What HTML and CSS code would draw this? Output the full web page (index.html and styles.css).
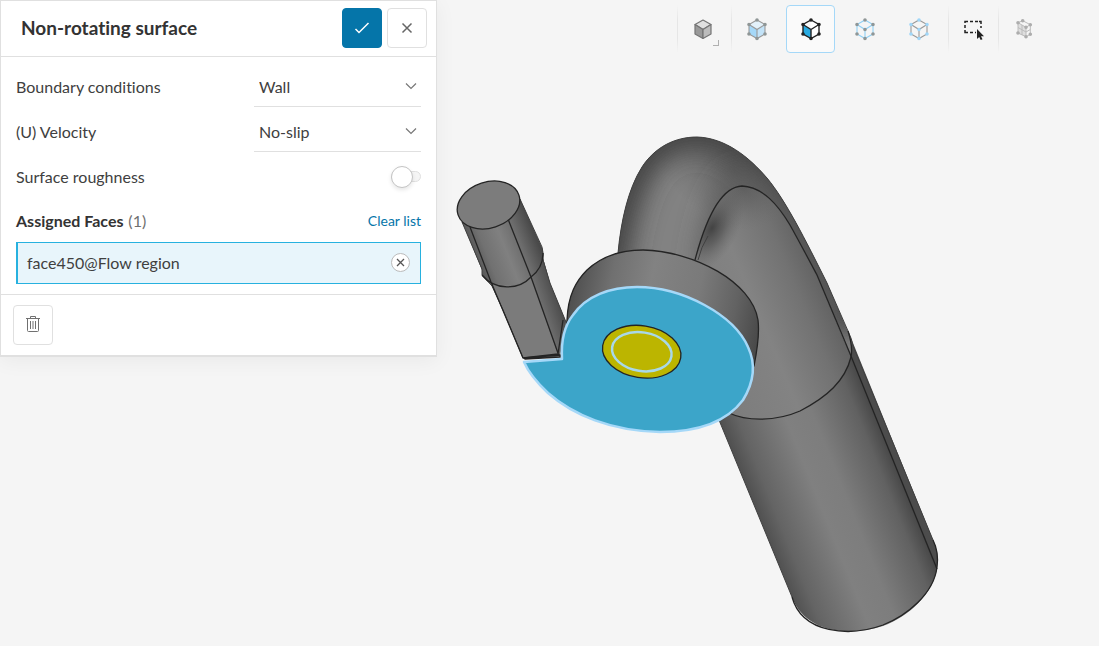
FILE: index.html
```html
<!DOCTYPE html>
<html lang="en">
<head>
<meta charset="utf-8">
<title>Non-rotating surface</title>
<link rel="stylesheet" href="styles.css">
</head>
<body>
<main class="workspace">
  <svg class="scene" viewBox="0 0 1099 646" role="img" aria-label="Pump flow region model">
    <defs>
      <linearGradient id="pipe" gradientUnits="userSpaceOnUse" x1="755" y1="508" x2="892" y2="453">
        <stop offset="0" stop-color="#505050"/><stop offset=".12" stop-color="#646464"/><stop offset=".42" stop-color="#808080"/><stop offset=".6" stop-color="#7d7d7d"/><stop offset=".88" stop-color="#616161"/><stop offset="1" stop-color="#464646"/>
      </linearGradient>
      <linearGradient id="elbow" gradientUnits="userSpaceOnUse" x1="700" y1="345" x2="836" y2="288">
        <stop offset="0" stop-color="#7c7c7c"/><stop offset=".45" stop-color="#838383"/><stop offset=".75" stop-color="#727272"/><stop offset="1" stop-color="#5c5c5c"/>
      </linearGradient>
      <linearGradient id="rim" gradientUnits="userSpaceOnUse" x1="567" y1="300" x2="759" y2="340">
        <stop offset="0" stop-color="#4d4d4d"/><stop offset=".2" stop-color="#707070"/><stop offset=".4" stop-color="#828282"/><stop offset=".65" stop-color="#7a7a7a"/><stop offset=".85" stop-color="#626262"/><stop offset="1" stop-color="#484848"/>
      </linearGradient>
      <linearGradient id="outlet" gradientUnits="userSpaceOnUse" x1="472" y1="252" x2="532" y2="228">
        <stop offset="0" stop-color="#555"/><stop offset=".2" stop-color="#717171"/><stop offset=".5" stop-color="#808080"/><stop offset=".75" stop-color="#6c6c6c"/><stop offset="1" stop-color="#494949"/>
      </linearGradient>
      <linearGradient id="outlet-side" gradientUnits="userSpaceOnUse" x1="540" y1="312" x2="561" y2="305">
        <stop offset="0" stop-color="#747474"/><stop offset="1" stop-color="#4a4a4a"/>
      </linearGradient>
      <radialGradient id="crease"><stop offset="0" stop-color="#434343"/><stop offset=".4" stop-color="#555" stop-opacity=".75"/><stop offset="1" stop-color="#6c6c6c" stop-opacity="0"/></radialGradient>
      <radialGradient id="crown"><stop offset="0" stop-color="#555" stop-opacity=".75"/><stop offset="1" stop-color="#666" stop-opacity="0"/></radialGradient>
      <clipPath id="bend-clip"><path d="M618 253C621 221 628 189 642 167C655 147 675 137 697 137C725 138 748 156 767 178C786 201 805 239 827 283L852 341L851 357L817 275C809 260 800 243 790 225C778 205 763 187 742 186C721 187 706 218 695 260L690 280H615Z"/></clipPath>
      <clipPath id="elbow-clip"><path d="M695 260C706 218 721 187 742 186C763 187 778 205 790 225C800 243 809 260 817 275L851 357C845 381 827 397 800 411C775 422 746 421 729 413L690 330Z"/></clipPath>
      <filter id="soft" x="-30%" y="-30%" width="160%" height="160%"><feGaussianBlur stdDeviation="12"/></filter>
    </defs>
    <path fill="url(#pipe)" d="M719 420L729 410L851 341L933 540Q939 552 937 567C934 594 908 617 883 626C850 637 805 633 792 597Z"/>
    <path fill="#4c4c4c" d="M851 338L933 540Q939 552 937 567L851 357Z"/>
    <g clip-path="url(#bend-clip)">
      <path fill="#828282" d="M600 120H870V400H600Z"/>
      <ellipse fill="url(#crown)" cx="735" cy="172" rx="80" ry="52" transform="rotate(25 735 172)"/>
      <path class="shade" filter="url(#soft)" d="M607 275C614 215 626 180 640 160C655 140 675 130 697 130C727 131 754 151 773 175C792 200 810 236 855 330"/>
      <path class="shade shade-inner" filter="url(#soft)" d="M708 270C714 218 727 184 742 182C768 185 790 218 837 315"/>
    </g>
    <g clip-path="url(#elbow-clip)">
      <path fill="url(#elbow)" d="M680 180H860V430H680Z"/>
      <ellipse fill="url(#crease)" cx="712" cy="228" rx="26" ry="48" transform="rotate(28 712 228)"/>
      <ellipse fill="url(#crease)" cx="743" cy="188" rx="50" ry="42" opacity=".45"/>
    </g>
    <path class="edge edge-faint" d="M618 253C621 221 628 189 642 167C655 147 675 137 697 137C725 138 748 156 767 178C786 201 805 239 827 283L848 331Q852 339 853 346L933 540M792 597L719 420"/>
    <path class="edge" d="M933 540Q939 552 937 567C934 594 906 616 883 625C850 637 802 634 792 597"/>
    <path class="edge" d="M695 260C706 218 721 187 742 186C763 187 778 205 790 225C800 243 809 260 817 275L851 356L937 569"/>
    <path class="edge" d="M848 331Q853 346 851 357C845 381 827 397 800 411C775 422 746 421 729 413"/>
    <path class="edge edge-faint" d="M698 260Q701 247 708 236"/>
    <path class="edge" fill="url(#rim)" d="M561 360L567 320C568 295 576 281 587 270C601 257 621 250 643 250C694 251 752 282 758 320Q760 336 754 366L720 400Z"/>

    <path fill="#606060" d="M463 223L482 270L482 276L492 286L503 310L523 358L560 357L566 322L550 283L543 258L543 250L520 199Z"/>
    <path fill="url(#outlet)" d="M462 222L482 270L482 275C495 291 519 290 531 277Q543 268 543 250L520 199Z"/>
    <path fill="#7b7b7b" d="M491 283Q516 289 531 277L558 354L523 358Z"/>
    <path fill="url(#outlet-side)" d="M531 277Q540 269 543 258L550 283L566 322L558 354Z"/>
    <path class="edge edge-faint" d="M462 222L482 269L482 275L492 286L503 310L523 358M520 199L542 247Q544 255 543 260L550 283L566 322"/>
    <path class="edge" d="M482 275C495 291 519 290 531 277Q543 268 543 253M470 227L491 282L523 358L558 354M508 219L531 277L559 356M558 354L563 320"/>
    <ellipse class="edge" fill="#7c7c7c" cx="488.500" cy="205" rx="32" ry="23" transform="rotate(-18 488.500 205)"/>

    <path class="face" d="M524 362L562 359C561 341 565 325 573 315C586 296 610 287 637 287C683 287 734 315 748 347C756 364 754 382 743 400C725 424 693 432 660 432C611 431 573 415 548 393Q530 376 524 362Z"/>
    <path class="edge" fill="#777" d="M524 358L560 355L560 357L525 359Z"/>
    <ellipse class="edge" fill="#bcb500" cx="641.700" cy="351.700" rx="39.500" ry="26" transform="rotate(9 641.700 351.700)"/>
    <ellipse class="ring" cx="641.800" cy="351.700" rx="30" ry="19.300" transform="rotate(9 641.800 351.700)"/>
  </svg>

  <form class="panel">
    <header class="panel-header">
      <h1 class="panel-title">Non-rotating surface</h1>
      <button class="button button-primary" type="button" aria-label="Apply">
        <svg width="18" height="18" viewBox="0 0 18 18"><path class="stroke-icon" d="M2.500 10L6 13.500L15.500 4"/></svg>
      </button>
      <button class="button" type="button" aria-label="Close">
        <svg width="18" height="18" viewBox="0 0 18 18"><path class="stroke-icon" d="M4.500 4.500L13.500 13.500M13.500 4.500L4.500 13.500"/></svg>
      </button>
    </header>
    <div class="panel-body">
      <div class="row">
        <label for="condition">Boundary conditions</label>
        <span class="select-wrap">
          <select class="select" id="condition"><option>Wall</option></select>
          <svg class="chevron" width="12" height="8" viewBox="0 0 12 8"><path class="stroke-icon" d="M1 1.500L6 6.500L11 1.500"/></svg>
        </span>
      </div>
      <div class="row">
        <label for="velocity">(U) Velocity</label>
        <span class="select-wrap">
          <select class="select" id="velocity"><option>No-slip</option></select>
          <svg class="chevron" width="12" height="8" viewBox="0 0 12 8"><path class="stroke-icon" d="M1 1.500L6 6.500L11 1.500"/></svg>
        </span>
      </div>
      <div class="row">
        <label for="roughness">Surface roughness</label>
        <input class="toggle" id="roughness" type="checkbox">
      </div>
      <div class="row row-list">
        <h2 class="list-title">Assigned Faces <span class="count">(1)</span></h2>
        <a class="clear" href="#">Clear list</a>
      </div>
      <div class="face-item">
        <span>face450@Flow region</span>
        <button class="remove" type="button" aria-label="Remove face">
          <svg width="9" height="9" viewBox="0 0 9 9"><path class="stroke-icon" d="M1 1L8 8M8 1L1 8"/></svg>
        </button>
      </div>
    </div>
    <footer class="panel-footer">
      <button class="button" type="button" aria-label="Delete">
        <svg width="16" height="18" viewBox="0 0 16 18"><path class="trash" d="M1 2.500H15M5.500 2V.5H10.500V2M2.500 3V14.500Q2.500 15.500 3.500 15.500H12.500Q13.500 15.500 13.500 14.500V3M5.500 5V13M8 5V13M10.500 5V13"/></svg>
      </button>
    </footer>
  </form>

  <nav class="toolbar" aria-label="View and selection">
    <div class="tool-group tool-group-first">
      <button class="tool tool-menu" type="button" aria-label="Render mode">
        <svg width="24" height="24" viewBox="0 0 24 24"><g stroke="#757575" stroke-width="1.200" stroke-linejoin="round"><path fill="#e0e0e0" d="M12 3L20 7.500L12 12.500L4 7.500Z"/><path fill="#999" d="M4 7.500L12 12.500V21.500L4 17Z"/><path fill="#bcbcbc" d="M20 7.500L12 12.500V21.500L20 17Z"/></g></svg>
      </button>
    </div>
    <div class="tool-group">
      <button class="tool" type="button" aria-label="Select volumes">
        <svg width="24" height="24" viewBox="0 0 24 24"><path fill="#e3f1fa" d="M12 3L20 7.500L12 12.500L4 7.500Z"/><path fill="#a5d8f8" d="M4 7.500L12 12.500V21.500L4 17Z"/><path fill="#c3e3f8" d="M20 7.500L12 12.500V21.500L20 17Z"/><path class="cube cube-gray" d="M12 3L20 7.500V17L12 21.500L4 17V7.500ZM4 7.500L12 12.500L20 7.500M12 12.500V21.500"/><path class="dots dots-gray" d="M12 3h0M20 7.500h0M20 17h0M12 21.500h0M4 17h0M4 7.500h0"/></svg>
      </button>
      <button class="tool tool-active" type="button" aria-label="Select faces" aria-pressed="true">
        <svg width="24" height="24" viewBox="0 0 24 24"><path fill="#fff" d="M12 3L20 7.500V17L12 21.500Z"/><path fill="#29abe2" d="M4 7.500L12 12.500V21.500L4 17Z"/><path class="cube cube-black" d="M12 3L20 7.500V17L12 21.500L4 17V7.500ZM4 7.500L12 12.500L20 7.500M12 12.500V21.500"/><path class="dots dots-black" d="M12 3h0M20 7.500h0M20 17h0M12 21.500h0M4 17h0M4 7.500h0"/></svg>
      </button>
      <button class="tool" type="button" aria-label="Select edges">
        <svg width="24" height="24" viewBox="0 0 24 24"><path class="cube cube-blue" d="M12 3L20 7.500V17L12 21.500L4 17V7.500ZM4 7.500L12 12.500L20 7.500M12 12.500V21.500"/><path class="dots dots-gray" d="M12 3h0M20 7.500h0M20 17h0M12 21.500h0M4 17h0M4 7.500h0M12 12.500h0"/></svg>
      </button>
      <button class="tool" type="button" aria-label="Select vertices">
        <svg width="24" height="24" viewBox="0 0 24 24"><path class="cube cube-gray" d="M12 3L20 7.500V17L12 21.500L4 17V7.500ZM4 7.500L12 12.500L20 7.500M12 12.500V21.500"/><path class="dots dots-blue" d="M12 3h0M20 7.500h0M20 17h0M12 21.500h0M4 17h0M4 7.500h0M12 12.500h0"/></svg>
      </button>
    </div>
    <div class="tool-group tool-group-tight">
      <button class="tool" type="button" aria-label="Box select">
        <svg width="24" height="24" viewBox="0 0 24 24"><path fill="none" stroke="#222" stroke-width="1.500" d="M3 6V4.500H6M8 4.500H11M13 4.500H16M17 4.500H19V7M19 9V11M3 8V11M3 13V15.500H6M8 15.500H11M13 15.500H14"/><path fill="#222" d="M15 12V22L17.200 20L18.700 23L20.500 22.200L19 19.200H22Z"/></svg>
      </button>
    </div>
    <div class="tool-group tool-group-tight">
      <button class="tool" type="button" aria-label="Select mesh">
        <svg width="24" height="24" viewBox="0 0 24 24"><path fill="#dedede" d="M6 5.700L14 10.300V19.700L6 16Z"/><path class="cube cube-pale" d="M10.700 3.700L18.300 7.700V17.300L14 19.700L6 16V5.700ZM6 5.700L14 10.300L18.300 7.700M14 10.300V19.700M6 10.500L14 15L18.300 12.500M10 8V18"/><path class="dots dots-pale" d="M10.700 3.700h0M18.300 7.700h0M18.300 17.300h0M14 19.700h0M6 16h0M6 5.700h0M14 10.300h0"/></svg>
      </button>
    </div>
  </nav>
</main>
</body>
</html>
```

FILE: styles.css
```css
* { box-sizing: border-box; }

body {
  margin: 0;
  background: #f5f5f5;
  color: #404040;
  font: 16px/21px Lato, "Open Sans", sans-serif;
  font-variant-ligatures: none;
}

button, select { font: inherit; color: inherit; }

.workspace {
  position: relative;
  display: flex;
  align-items: flex-start;
  justify-content: space-between;
  min-height: 100vh;
  overflow: hidden;
}

/* 3D model drawn behind the panel and the toolbar */
.scene {
  position: absolute;
  inset: 0;
  width: 100%;
  height: 100%;
}

.edge { stroke: #242424; stroke-width: 1.3; stroke-linejoin: round; }
.edge:not([fill]) { fill: none; }
.edge-faint { stroke: #404040; stroke-width: 1; }
.shade { fill: none; stroke: #444; stroke-width: 40; }
.shade-inner { stroke: #5c5c5c; stroke-width: 22; }
.face { fill: #3ca5c9; stroke: #a5d8f8; stroke-width: 2.5; stroke-linejoin: round; }
.ring { fill: none; stroke: #a9d8e8; stroke-width: 2.5; }

.panel {
  position: relative;
  flex: 0 1 437px;
  border: 1px solid #e0e0e0;
  border-bottom-width: 2px;
  background: #fff;
  box-shadow: 0 4px 20px rgba(0, 0, 0, .05);
}

.panel-header {
  display: flex;
  align-items: center;
  gap: 5px;
  padding: 7px 9px 8px 20px;
  border-bottom: 1px solid #e0e0e0;
}

.panel-title {
  flex: 1;
  margin: 0;
  color: #333;
  font-size: 19px;
  line-height: 24px;
  font-weight: 700;
}

.button {
  display: flex;
  align-items: center;
  justify-content: center;
  width: 40px;
  height: 40px;
  padding: 0;
  border: 1px solid #e0e0e0;
  border-radius: 4px;
  background: #fff;
  color: #666;
}

.button-primary { border-color: #0575a9; background: #0575a9; color: #fff; }

.stroke-icon { fill: none; stroke: currentColor; stroke-width: 1.5; }
.trash { fill: none; stroke: #707070; stroke-width: 1; }

.panel-body { padding: 7px 15px 10px; }

.row {
  display: flex;
  align-items: center;
  justify-content: space-between;
  height: 45px;
}

.row-list { height: 43px; }

.select-wrap { position: relative; display: flex; flex: 0 0 167px; }

.select {
  width: 100%;
  height: 41px;
  padding: 0 5px;
  border: 0;
  border-bottom: 1px solid #e0e0e0;
  border-radius: 0;
  background: transparent;
  appearance: none;
}

.chevron { position: absolute; top: 16px; right: 4px; color: #777; pointer-events: none; }
.chevron .stroke-icon { stroke-width: 1.2; }

.toggle {
  position: relative;
  width: 30px;
  height: 11px;
  margin: 0;
  border: 1px solid #e0e0e0;
  border-radius: 6px;
  background: #f5f5f5;
  appearance: none;
}

.toggle::before {
  content: "";
  position: absolute;
  top: -6px;
  left: -1px;
  width: 20px;
  height: 20px;
  border: 1px solid #c4c4c4;
  border-radius: 50%;
  background: #fff;
  box-shadow: 0 2px 4px rgba(0, 0, 0, .1);
}

.list-title { margin: 0; color: #333; font-size: 16px; font-weight: 700; }
.count { margin-left: 1px; color: #707070; font-weight: 400; }
.clear { color: #0575a9; font-size: 14px; text-decoration: none; }

.face-item {
  display: flex;
  align-items: center;
  justify-content: space-between;
  height: 42px;
  padding: 0 10px 1px 9px;
  border: 1px solid #27b1df;
  border-left-width: 2px;
  background: #e8f5fb;
}

.remove {
  display: flex;
  align-items: center;
  justify-content: center;
  width: 19px;
  height: 19px;
  padding: 0;
  border: 1px solid #bbb;
  border-radius: 50%;
  background: #fff;
  color: #555;
}

.remove .stroke-icon { stroke-width: 1.3; }

.panel-footer { padding: 10px 12px; border-top: 1px solid #e0e0e0; }

.toolbar { position: relative; display: flex; margin: 5px 51px 0 0; }

.tool-group {
  display: flex;
  gap: 5px;
  padding: 0 5px 0 1px;
  background: linear-gradient(transparent, #e6e6e6 30%, #e6e6e6 70%, transparent) no-repeat left / 1px 100%;
}

.tool-group-first { padding-right: 4px; }
.tool-group-tight { padding-right: 0; }

.tool {
  position: relative;
  display: flex;
  align-items: center;
  justify-content: center;
  width: 49px;
  height: 48px;
  padding: 0;
  border: 1px solid transparent;
  border-radius: 4px;
  background: transparent;
}

.tool-active { border-color: #a5d8f8; background: #fafafa; }

/* Corner mark of a tool that opens a menu */
.tool-menu::after {
  content: "";
  position: absolute;
  right: 7px;
  bottom: 6px;
  width: 5px;
  height: 5px;
  border: solid #b0b0b0;
  border-width: 0 1px 1px 0;
}

.cube { fill: none; stroke-width: 1.1; }
.cube-gray { stroke: #999; }
.cube-black { stroke: #222; stroke-width: 1.4; }
.cube-blue { stroke: #8fd0f5; }
.cube-pale { stroke: #bcbcbc; stroke-width: 1; }
.dots { stroke-width: 3.6; stroke-linecap: round; }
.dots-gray { stroke: #8f9696; }
.dots-black { stroke: #222; }
.dots-blue { stroke: #9fd6f8; }
.dots-pale { stroke: #adadad; }
```
